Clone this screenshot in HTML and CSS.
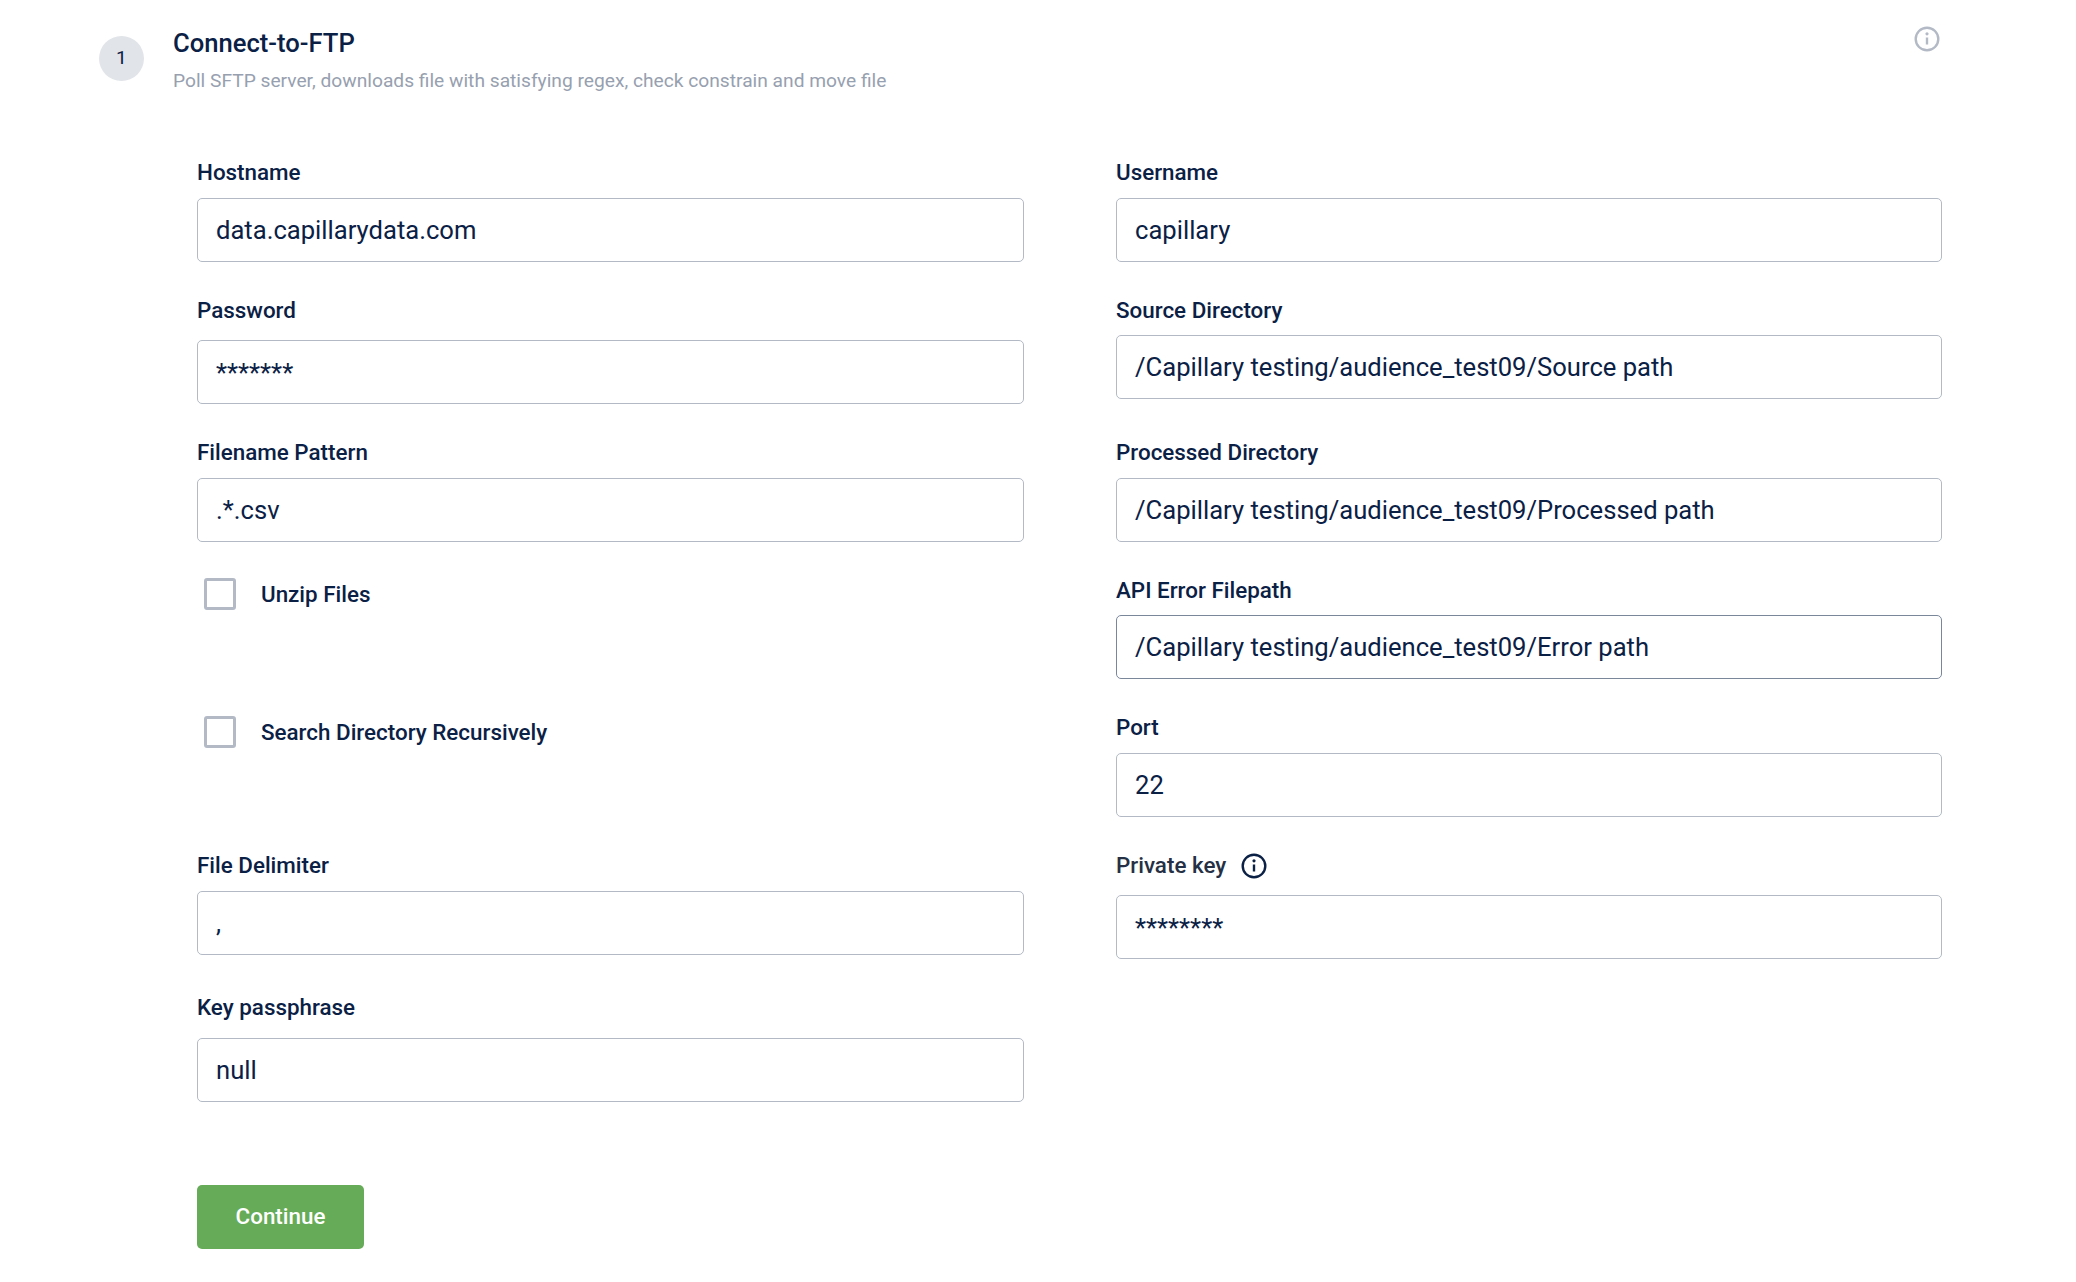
FILE: index.html
```html
<!DOCTYPE html>
<html lang="en">
<head>
<meta charset="utf-8">
<title>Connect-to-FTP</title>
<link rel="stylesheet" href="styles.css">
</head>
<body>
<main class="page">
  <header class="head">
    <div class="step">1</div>
    <div class="head-text">
      <h1 class="title">Connect-to-FTP</h1>
      <p class="desc">Poll SFTP server, downloads file with satisfying regex, check constrain and move file</p>
    </div>
    <svg class="head-info" viewBox="0 0 26 26" width="26" height="26" fill="none" stroke="#b3bac5" stroke-width="2.4"><circle cx="13" cy="13" r="11.3"/><path d="M13 11.5v7"/><circle cx="13" cy="7.8" r="1.6" fill="#b3bac5" stroke="none"/></svg>
  </header>
  <div class="form">
    <div class="col">
      <div class="field first"><label class="label">Hostname</label><input class="input" value="data.capillarydata.com"></div>
      <div class="field wide"><label class="label">Password</label><input class="input stars" value="*******"></div>
      <div class="field"><label class="label">Filename Pattern</label><input class="input" value=".*.csv"></div>
      <label class="check unzip"><span class="box"></span><span class="check-text">Unzip Files</span></label>
      <label class="check recursive"><span class="box"></span><span class="check-text">Search Directory Recursively</span></label>
      <div class="field after-check"><label class="label">File Delimiter</label><input class="input" value=","></div>
      <div class="field wide passphrase"><label class="label">Key passphrase</label><input class="input" value="null"></div>
      <button class="continue" type="button">Continue</button>
    </div>
    <div class="col">
      <div class="field first"><label class="label">Username</label><input class="input" value="capillary"></div>
      <div class="field tight"><label class="label">Source Directory</label><input class="input" value="/Capillary testing/audience_test09/Source path"></div>
      <div class="field far"><label class="label">Processed Directory</label><input class="input" value="/Capillary testing/audience_test09/Processed path"></div>
      <div class="field tight"><label class="label">API Error Filepath</label><input class="input active" value="/Capillary testing/audience_test09/Error path"></div>
      <div class="field"><label class="label">Port</label><input class="input" value="22"></div>
      <div class="field wide"><label class="label label-dark">Private key<svg class="key-info" viewBox="0 0 26 26" width="26" height="26" fill="none" stroke="#0b2045" stroke-width="2.4"><circle cx="13" cy="13" r="11.3"/><path d="M13 11.5v7"/><circle cx="13" cy="7.8" r="1.6" fill="#0b2045" stroke="none"/></svg></label><input class="input stars" value="********"></div>
    </div>
  </div>
</main>
</body>
</html>
```
FILE: styles.css
```css
* { box-sizing: border-box; }
html, body { margin: 0; padding: 0; background: #fff; }
body { font-family: Roboto, "Liberation Sans", sans-serif; color: #0b2045; }
.page { width: 2076px; height: 1282px; overflow: hidden; }
.head { display: flex; padding: 26px 136px 0 99px; height: 158px; align-items: flex-start; }
.step { width: 45px; height: 45px; margin-top: 10px; padding-bottom: 2px; border-radius: 50%; background: #e1e4e8; display: flex; align-items: center; justify-content: center; font-size: 19.2px; flex: none; }
.head-text { margin-left: 29px; flex: 1; }
.title { margin: 0; font-size: 25.6px; line-height: 34px; font-weight: 500; }
.desc { margin: 9px 0 0; font-size: 19.2px; line-height: 24px; color: #97a0af; }
.head-info { flex: none; }
.form { display: grid; grid-template-columns: 827px 826px; column-gap: 92px; padding-left: 197px; }
.col { display: flex; flex-direction: column; align-items: flex-start; }
.field { width: 100%; margin-top: 34px; flex: none; }
.first { margin-top: 0; }
.far { margin-top: 39px; }
.passphrase { margin-top: 38px; }
.after-check { margin-top: 103px; }
.label { display: flex; height: 28px; font-size: 22.4px; line-height: 28px; font-weight: 500; white-space: pre; }
.label-dark { color: #253044; }
.key-info { margin-left: 15px; margin-top: 2px; flex: none; }
.input { display: block; width: 100%; height: 64px; margin-top: 12px; border: 1.5px solid #b3bac5; border-radius: 5px; padding: 0 18px 1px; font: 400 25.6px Roboto, sans-serif; color: #0b2045; background: #fff; outline: none; }
.wide .input { margin-top: 16px; }
.passphrase .input { margin-top: 17px; }
.tight .input { margin-top: 11px; }
.stars { padding-top: 1px; padding-bottom: 0; }
.active { border-color: #7a869a; }
.check { display: flex; align-items: center; height: 32px; flex: none; padding-left: 7px; }
.unzip { margin-top: 36px; }
.recursive { margin-top: 106px; }
.box { width: 32px; height: 32px; border: 3px solid #b3bac5; border-radius: 3px; flex: none; }
.check-text { margin-left: 25px; font-size: 22.4px; font-weight: 500; }
.continue { margin-top: 83px; width: 167px; height: 64px; padding-bottom: 3px; border: 0; border-radius: 5px; background: #66ab57; color: #fff; font: 500 22.4px Roboto, sans-serif; }
```
